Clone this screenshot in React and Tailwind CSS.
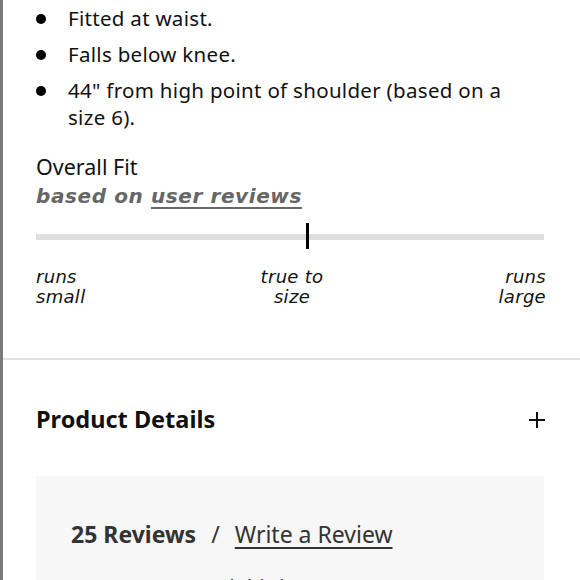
import React from 'react';

const bullets = [
  'Fitted at waist.',
  'Falls below knee.',
  '44" from high point of shoulder (based on a size 6).',
];

export default function App() {
  return (
    <div className="w-[580px] h-[580px] overflow-hidden bg-white border-l-[3px] border-[#7a7a7a] font-['Noto_Sans',sans-serif] text-[#111]">
      <ul className="pl-[33px] pr-[62px] pt-[5px] flex flex-col gap-[9px]">
        {bullets.map((b) => (
          <li key={b} className="flex text-[20.5px] leading-[27px] tracking-[0.3px]">
            <span className="w-[32px] shrink-0 flex items-start pt-[9px]">
              <span className="w-[10px] h-[10px] rounded-full bg-black" />
            </span>
            <span>{b}</span>
          </li>
        ))}
      </ul>

      <div className="pl-[33px] pr-[36px] pt-[22px]">
        <div className="text-[21.5px] leading-[28px]">Overall Fit</div>
        <div className="text-[20px] leading-[30px] font-bold italic tracking-[0.6px] text-[#666] font-['DejaVu_Sans',sans-serif]">
          based on <span className="underline underline-offset-[4px]">user reviews</span>
        </div>

        <div className="relative mt-[23px] h-[6px] bg-[#dedede]">
          <div className="absolute left-[270px] top-[-11px] w-[3px] h-[26px] bg-black" />
        </div>

        <div className="mt-[27px] -mr-[2px] flex justify-between text-[18px] leading-[20px] italic font-['DejaVu_Sans',sans-serif] tracking-[0.3px]">
          <div>runs<br />small</div>
          <div className="text-center">true to<br />size</div>
          <div className="text-right">runs<br />large</div>
        </div>
      </div>

      <div className="mt-[51px] border-t-2 border-[#e2e2e2]" />

      <div className="pl-[33px] pr-[36px] pt-[42px] flex items-center justify-between">
        <div className="text-[23.5px] font-bold">Product Details</div>
        <svg width="16" height="16" viewBox="0 0 16 16" className="mr-[-1px]">
          <path d="M8 0v16M0 8h16" stroke="#111" strokeWidth="2" />
        </svg>
      </div>

      <div className="ml-[33px] mr-[36px] mt-[39px] bg-[#f7f7f7] px-[35px] pt-[41px] h-[200px]">
        <div className="flex items-baseline text-[23px] text-[#333]">
          <span className="font-bold">25 Reviews</span>
          <span className="mx-[15px]">/</span>
          <span className="underline underline-offset-[4px]">Write a Review</span>
        </div>
        <div className="mt-[20px] text-[20px] text-[#333]">91% Recommend this item</div>
      </div>
    </div>
  );
}
